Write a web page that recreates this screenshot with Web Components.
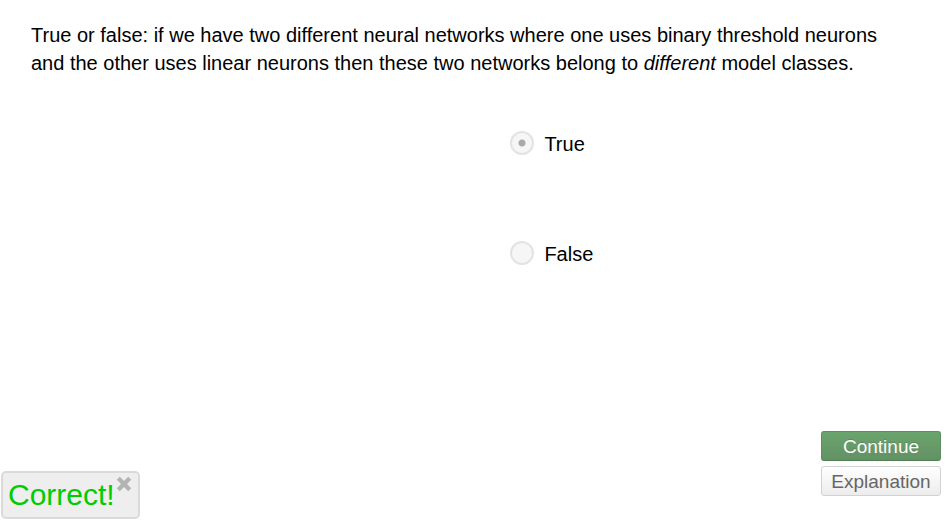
<!DOCTYPE html>
<html lang="en">
<head>
<meta charset="utf-8">
<title>Quiz</title>
<style>
body { margin: 0; background: #fff; color: #000; font-family: "Liberation Sans", Arial, sans-serif; }
</style>
</head>
<body>
<quiz-page>
  <quiz-question slot="question">True or false: if we have two different neural networks where one uses binary threshold neurons and the other uses linear neurons then these two networks belong to <em>different</em> model classes.</quiz-question>
  <quiz-options slot="options">
    <quiz-option name="answer" value="true" checked>True</quiz-option>
    <quiz-option name="answer" value="false">False</quiz-option>
  </quiz-options>
  <quiz-result slot="result">Correct!</quiz-result>
  <quiz-button slot="actions" variant="primary">Continue</quiz-button>
  <quiz-button slot="actions">Explanation</quiz-button>
</quiz-page>

<template id="page-template">
  <style>
    :host { display: flex; flex-direction: column; min-height: 100vh; box-sizing: border-box; padding: 21px 6px 4px 1px; }
    main { flex: 1; }
    footer { display: flex; align-items: flex-end; justify-content: space-between; }
    .actions { display: flex; flex-direction: column; gap: 5px; width: 120px; padding-bottom: 23px; }
  </style>
  <main>
    <slot name="question"></slot>
    <slot name="options"></slot>
  </main>
  <footer>
    <slot name="result"></slot>
    <div class="actions"><slot name="actions"></slot></div>
  </footer>
</template>

<template id="question-template">
  <style>
    :host { display: block; padding: 0 30px; font-size: 20px; line-height: 28px; }
    p { margin: 0; }
  </style>
  <p><slot></slot></p>
</template>

<template id="options-template">
  <style>
    :host { display: grid; grid-auto-rows: 24px; row-gap: 86px; padding: 54px 0 0 30px; margin-left: 51%; }
  </style>
  <slot></slot>
</template>

<template id="option-template">
  <style>
    :host { display: block; font-size: 20px; line-height: 24px; }
    label { display: inline-flex; align-items: center; gap: 10px; }
    span { padding-top: 2px; line-height: 22px; }
    input {
      appearance: none; box-sizing: border-box; width: 24px; height: 24px; margin: 0;
      border: 2px solid #e3e3e3; border-radius: 50%; background: #f6f6f6;
    }
    input:checked { background: radial-gradient(circle, #aaa 3px, #f6f6f6 4px); }
  </style>
  <label><input type="radio" disabled><span><slot></slot></span></label>
</template>

<template id="button-template">
  <style>
    :host { display: block; }
    button {
      display: block; box-sizing: border-box; width: 100%; height: 30px; margin: 0; padding: 1px 0 0;
      border: 1px solid #d2d2d2; border-radius: 3px;
      background: linear-gradient(#fff, #ececec); color: #666;
      font: 19px/27px "Liberation Sans", Arial, sans-serif; text-align: center; white-space: nowrap;
    }
    :host([variant="primary"]) button {
      border-color: #58915b; border-bottom-color: #50804f;
      background: linear-gradient(#6ba46c, #639164); color: #fff;
      text-shadow: 0 -1px 0 rgba(0, 0, 0, .15);
    }
  </style>
  <button type="button"><slot></slot></button>
</template>

<template id="result-template">
  <style>
    :host {
      display: flex; align-items: flex-start; box-sizing: border-box; padding: 3px 6px 5px 5px;
      border: 2px solid #dadada; border-radius: 5px; background: #eee;
      color: #0c0; font-size: 30px; line-height: 34px;
    }
    .message { padding-top: 2px; }
    button { display: block; margin: 0 0 0 1px; padding: 0; border: 0; background: none; }
    svg { display: block; width: 16px; height: 16px; }
  </style>
  <span class="message"><slot></slot></span>
  <button type="button" aria-label="Close">
    <svg viewBox="0 0 16 16" aria-hidden="true"><path d="M3.8 .8 8 5l4.200-4.200 3 3L11 8l4.200 4.200-3 3L8 11l-4.200 4.200-3-3L5 8 .8 3.800Z" fill="#b3b3b3"/></svg>
  </button>
</template>

<script>
class TemplateElement extends HTMLElement {
  constructor() {
    super();
    const template = document.getElementById(this.constructor.templateId);
    this.attachShadow({ mode: "open" }).append(template.content.cloneNode(true));
  }
}
class QuizPage extends TemplateElement { static templateId = "page-template"; }
class QuizQuestion extends TemplateElement { static templateId = "question-template"; }
class QuizOptions extends TemplateElement { static templateId = "options-template"; }
class QuizOption extends TemplateElement {
  static templateId = "option-template";
  connectedCallback() {
    const input = this.shadowRoot.querySelector("input");
    input.name = this.getAttribute("name");
    input.value = this.getAttribute("value");
    input.checked = this.hasAttribute("checked");
  }
}
class QuizButton extends TemplateElement { static templateId = "button-template"; }
class QuizResult extends TemplateElement {
  static templateId = "result-template";
  connectedCallback() {
    this.shadowRoot.querySelector("button").onclick = () => this.remove();
  }
}
customElements.define("quiz-page", QuizPage);
customElements.define("quiz-question", QuizQuestion);
customElements.define("quiz-options", QuizOptions);
customElements.define("quiz-option", QuizOption);
customElements.define("quiz-button", QuizButton);
customElements.define("quiz-result", QuizResult);
</script>
</body>
</html>
